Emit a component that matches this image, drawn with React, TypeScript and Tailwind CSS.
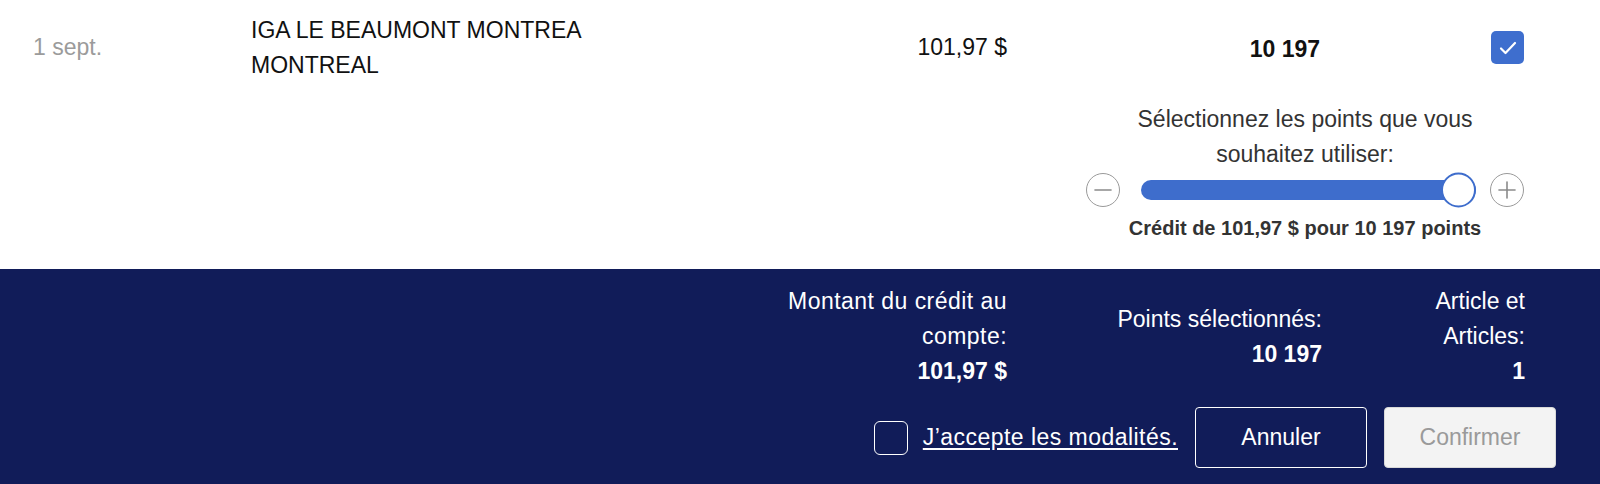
const font = { fontFamily: '"Liberation Sans", Arial, sans-serif' };

function RoundButton({ sign }: { sign: "minus" | "plus" }) {
  return (
    <button className="flex h-[34px] w-[34px] shrink-0 items-center justify-center rounded-full border-[1.5px] border-[#9a9a9a] bg-white">
      <svg width="20" height="20" viewBox="0 0 20 20" fill="none" stroke="#8a8a8a" strokeWidth="1.6" strokeLinecap="round">
        <line x1="2" y1="10" x2="18" y2="10" />
        {sign === "plus" && <line x1="10" y1="2" x2="10" y2="18" />}
      </svg>
    </button>
  );
}

export default function App() {
  return (
    <div className="h-[484px] w-full overflow-hidden text-[23px] leading-[35px]" style={font}>
      {/* Transaction row */}
      <div className="h-[269px] bg-white">
        <div className="flex h-[95px] items-center pl-[33px]">
          <div className="w-[218px] shrink-0 text-[#9b9b9b]">1 sept.</div>
          <div className="w-[500px] shrink-0 text-[#111]">
            IGA LE BEAUMONT MONTREA
            <br />
            MONTREAL
          </div>
          <div className="w-[256px] shrink-0 text-right text-[#111]">101,97 $</div>
          <div className="ml-[88px] w-[380px] shrink-0 pt-[3px] text-center font-bold text-[#111]">10 197</div>
          <div className="ml-[16px] flex h-[33px] w-[33px] shrink-0 items-center justify-center rounded-[5px] bg-[#3e6ece]">
            <svg width="18" height="14" viewBox="0 0 18 14" fill="none" stroke="white" strokeWidth="2.2" strokeLinecap="round" strokeLinejoin="round">
              <path d="M2 7.5 L6.5 12 L16 2" />
            </svg>
          </div>
        </div>

        {/* Points slider */}
        <div className="ml-[1086px] mt-[7px] w-[438px] text-center">
          <div className="text-[#333]">
            Sélectionnez les points que vous
            <br />
            souhaitez utiliser:
          </div>
          <div className="flex h-[35px] items-center">
            <RoundButton sign="minus" />
            <div className="relative ml-[21px] h-[20px] flex-1 rounded-full bg-[#3e6dcc]">
              <div className="absolute right-0 top-1/2 h-[35px] w-[35px] -translate-y-1/2 rounded-full border-2 border-[#3e6dcc] bg-white" />
            </div>
            <div className="ml-[14px]">
              <RoundButton sign="plus" />
            </div>
          </div>
          <div className="mt-[4px] text-[20px] font-bold leading-[34px] text-[#333]">
            Crédit de 101,97 $ pour 10 197 points
          </div>
        </div>
      </div>

      {/* Summary footer */}
      <div className="h-[215px] bg-[#111c59] pr-[44px] pt-[15px] text-white">
        <div className="flex items-center justify-end pr-[31px]">
          <div className="w-[240px] text-right tracking-[0.02em]">
            Montant du crédit au compte:
            <div className="font-bold tracking-normal">101,97 $</div>
          </div>
          <div className="ml-[65px] w-[250px] text-right">
            Points sélectionnés:
            <div className="font-bold">10 197</div>
          </div>
          <div className="ml-[83px] w-[120px] text-right">
            Article et Articles:
            <div className="font-bold">1</div>
          </div>
        </div>

        <div className="mt-[18px] flex items-center justify-end">
          <div className="h-[34px] w-[34px] rounded-[6px] border-[1.5px] border-white" />
          <a className="ml-[15px] tracking-[0.02em] underline underline-offset-[3px]" href="#">
            J’accepte les modalités.
          </a>
          <button className="ml-[17px] h-[61px] w-[172px] rounded-[4px] border border-white text-white">
            Annuler
          </button>
          <button className="ml-[17px] h-[61px] w-[172px] rounded-[4px] border border-[#d8d8d8] bg-[#f3f3f3] text-[#9a9a9a]">
            Confirmer
          </button>
        </div>
      </div>
    </div>
  );
}
